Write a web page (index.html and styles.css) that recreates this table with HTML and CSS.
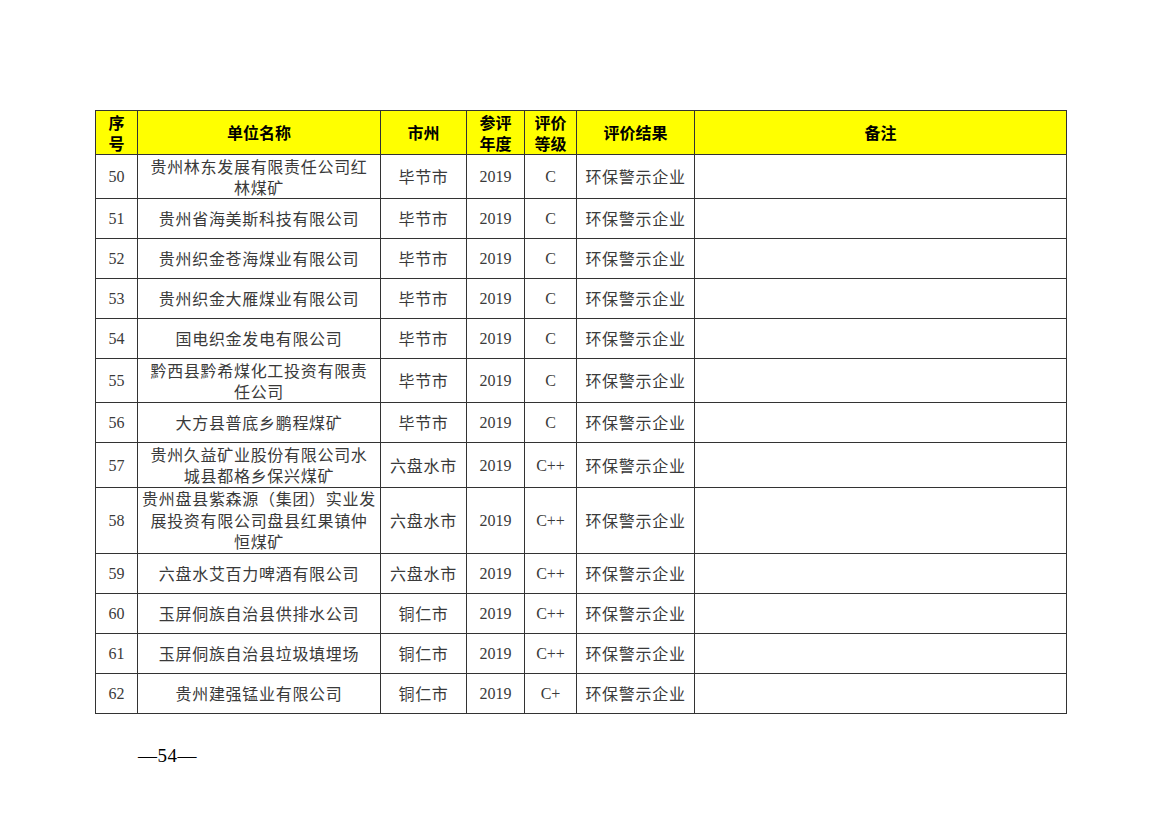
FILE: index.html
```html
<!DOCTYPE html>
<html lang="zh-CN">
<head>
<meta charset="utf-8">
<title>表</title>
<link rel="stylesheet" href="styles.css">
</head>
<body>
<div class="page">
<table class="grid">
<colgroup>
<col class="c1"><col class="c2"><col class="c3"><col class="c4"><col class="c5"><col class="c6"><col class="c7">
</colgroup>
<thead>
<tr class="head">
<th>序<br>号</th><th>单位名称</th><th>市州</th><th>参评<br>年度</th><th>评价<br>等级</th><th>评价结果</th><th>备注</th>
</tr>
</thead>
<tbody>
<tr class="h44"><td class="num">50</td><td>贵州林东发展有限责任公司红<br>林煤矿</td><td>毕节市</td><td class="num">2019</td><td class="num">C</td><td>环保警示企业</td><td></td></tr>
<tr class="h40"><td class="num">51</td><td>贵州省海美斯科技有限公司</td><td>毕节市</td><td class="num">2019</td><td class="num">C</td><td>环保警示企业</td><td></td></tr>
<tr class="h40"><td class="num">52</td><td>贵州织金苍海煤业有限公司</td><td>毕节市</td><td class="num">2019</td><td class="num">C</td><td>环保警示企业</td><td></td></tr>
<tr class="h40"><td class="num">53</td><td>贵州织金大雁煤业有限公司</td><td>毕节市</td><td class="num">2019</td><td class="num">C</td><td>环保警示企业</td><td></td></tr>
<tr class="h40"><td class="num">54</td><td>国电织金发电有限公司</td><td>毕节市</td><td class="num">2019</td><td class="num">C</td><td>环保警示企业</td><td></td></tr>
<tr class="h44"><td class="num">55</td><td>黔西县黔希煤化工投资有限责<br>任公司</td><td>毕节市</td><td class="num">2019</td><td class="num">C</td><td>环保警示企业</td><td></td></tr>
<tr class="h40"><td class="num">56</td><td>大方县普底乡鹏程煤矿</td><td>毕节市</td><td class="num">2019</td><td class="num">C</td><td>环保警示企业</td><td></td></tr>
<tr class="h45"><td class="num">57</td><td>贵州久益矿业股份有限公司水<br>城县都格乡保兴煤矿</td><td>六盘水市</td><td class="num">2019</td><td class="num">C++</td><td>环保警示企业</td><td></td></tr>
<tr class="h66"><td class="num">58</td><td>贵州盘县紫森源（集团）实业发<br>展投资有限公司盘县红果镇仲<br>恒煤矿</td><td>六盘水市</td><td class="num">2019</td><td class="num">C++</td><td>环保警示企业</td><td></td></tr>
<tr class="h40"><td class="num">59</td><td>六盘水艾百力啤酒有限公司</td><td>六盘水市</td><td class="num">2019</td><td class="num">C++</td><td>环保警示企业</td><td></td></tr>
<tr class="h40"><td class="num">60</td><td>玉屏侗族自治县供排水公司</td><td>铜仁市</td><td class="num">2019</td><td class="num">C++</td><td>环保警示企业</td><td></td></tr>
<tr class="h40"><td class="num">61</td><td>玉屏侗族自治县垃圾填埋场</td><td>铜仁市</td><td class="num">2019</td><td class="num">C++</td><td>环保警示企业</td><td></td></tr>
<tr class="h40"><td class="num">62</td><td>贵州建强锰业有限公司</td><td>铜仁市</td><td class="num">2019</td><td class="num">C+</td><td>环保警示企业</td><td></td></tr>
</tbody>
</table>
<div class="pageno">—54—</div>
</div>
</body>
</html>
```

FILE: styles.css
```css
html, body {
  margin: 0;
  padding: 0;
  background: #ffffff;
}
.page {
  padding: 110px 0 0 95px;
}
.grid {
  border-collapse: collapse;
  table-layout: fixed;
  width: 971px;
  font-family: "Noto Sans CJK SC", "Liberation Serif", serif;
  font-size: 16px;
  color: #3a3a3a;
}
.c1 { width: 42px; }
.c2 { width: 243px; }
.c3 { width: 86px; }
.c4 { width: 58px; }
.c5 { width: 52px; }
.c6 { width: 118px; }
.c7 { width: 372px; }
.grid th, .grid td {
  border: 1px solid #333333;
  padding: 0;
  text-align: center;
  vertical-align: middle;
  line-height: 21px;
  letter-spacing: 0.7px;
  white-space: nowrap;
  overflow: hidden;
}
.head th {
  background: #ffff00;
  color: #000000;
  font-weight: 700;
  font-size: 16px;
  line-height: 21px;
  letter-spacing: 0;
  height: 43px;
}
.grid td.num {
  font-family: "Liberation Serif", serif;
  font-size: 16px;
  letter-spacing: 0;
}
.h40 td { height: 39px; }
.h44 td { height: 43px; }
.h45 td { height: 44px; }
.h66 td { height: 65px; line-height: 21.5px; }
.pageno {
  margin: 31px 0 0 43px;
  font-family: "Liberation Serif", serif;
  font-size: 19px;
  line-height: 22px;
  color: #000000;
  letter-spacing: 0.5px;
}
```
